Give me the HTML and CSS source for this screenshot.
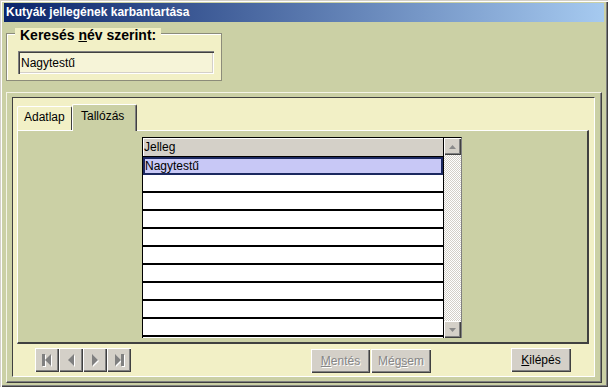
FILE: index.html
```html
<!DOCTYPE html>
<html lang="hu">
<head>
  <meta charset="UTF-8">
  <title>Kutyák jellegének karbantartása</title>
  <link rel="stylesheet" href="styles.css">
</head>
<body>
  <div class="window">
    <div class="titlebar">Kutyák jellegének karbantartása</div>

    <!-- Keresés -->
    <div class="search">
      <div class="legend">Keresés <u>n</u>év szerint:</div>
      <input class="search-input" type="text" value="Nagytestű">
    </div>

    <div class="frame">
      <div class="frame-inner">
        <div class="tabs">
          <div class="tab">Adatlap</div>
          <div class="tab active">Tallózás</div>
        </div>

        <div class="tab-panel">
          <div class="grid">
            <div class="grid-cells">
              <div class="grid-head">Jelleg</div>
              <div class="grid-row selected">Nagytestű</div>
              <div class="grid-row"></div>
              <div class="grid-row"></div>
              <div class="grid-row"></div>
              <div class="grid-row"></div>
              <div class="grid-row"></div>
              <div class="grid-row"></div>
              <div class="grid-row"></div>
              <div class="grid-row"></div>
              <div class="grid-row"></div>
            </div>
            <div class="scrollbar">
              <div class="scroll-btn">
                <svg width="7" height="4" viewBox="0 0 7 4"><polygon points="3.5,0 7,4 0,4" fill="#8a8a8a"/></svg>
              </div>
              <div class="scroll-track"></div>
              <div class="scroll-btn">
                <svg width="7" height="4" viewBox="0 0 7 4"><polygon points="0,0 7,0 3.5,4" fill="#8a8a8a"/></svg>
              </div>
            </div>
          </div>
        </div>

        <div class="toolbar">
          <div class="nav">
            <div class="nav-btn">
              <svg width="24" height="24" viewBox="0 0 24 24">
                <rect x="8" y="7" width="3" height="12" fill="#fff"/>
                <polygon points="17,7 11,13 17,19" fill="#fff"/>
                <rect x="7" y="6" width="3" height="12" fill="#808080"/>
                <polygon points="16,6 10,12 16,18" fill="#808080"/>
              </svg>
            </div>
            <div class="nav-btn">
              <svg width="24" height="24" viewBox="0 0 24 24">
                <polygon points="16,7 10,13 16,19" fill="#fff"/>
                <polygon points="15,6 9,12 15,18" fill="#808080"/>
              </svg>
            </div>
            <div class="nav-btn">
              <svg width="24" height="24" viewBox="0 0 24 24">
                <polygon points="10,7 16,13 10,19" fill="#fff"/>
                <polygon points="9,6 15,12 9,18" fill="#808080"/>
              </svg>
            </div>
            <div class="nav-btn">
              <svg width="24" height="24" viewBox="0 0 24 24">
                <polygon points="9,7 15,13 9,19" fill="#fff"/>
                <rect x="15" y="7" width="3" height="12" fill="#fff"/>
                <polygon points="8,6 14,12 8,18" fill="#808080"/>
                <rect x="14" y="6" width="3" height="12" fill="#808080"/>
              </svg>
            </div>
          </div>
          <div class="btn disabled save"><u>M</u>entés</div>
          <div class="btn disabled cancel">Még<u>s</u>em</div>
          <div class="btn exit"><u>K</u>ilépés</div>
        </div>
      </div>
    </div>
  </div>
</body>
</html>
```

FILE: styles.css
```css
* {
  box-sizing: border-box;
}

body {
  margin: 0;
  background: #cbd0a5;
  font-family: 'Liberation Sans', Arial, sans-serif;
  font-size: 12px;
  color: #000;
}

.window {
  width: 608px;
  height: 387px;
  padding: 3px 4px 0 4px;
  background: #cbd0a5;
  box-shadow: inset 1px 1px #d4d0c8, inset 2px 2px #fff, inset -1px -1px #404040, inset -2px -2px #808080;
  overflow: hidden;
}

.titlebar {
  height: 19px;
  padding-left: 2px;
  line-height: 19px;
  font-weight: bold;
  color: #fff;
  background: linear-gradient(to right, #0a246a, #a6caf0);
}

/* Keresés doboz */
.search {
  width: 216px;
  height: 48px;
  margin: 11px 0 0 2px;
  background: #f2f0c6;
  border: 1px solid #8c8c7a;
  box-shadow: inset 1px 1px #fff;
}

.legend {
  width: fit-content;
  margin: -6px 0 0 8px;
  padding: 0 5px;
  line-height: 14px;
  font-size: 14px;
  font-weight: bold;
  background: #f2f0c6;
}

.search-input {
  display: block;
  width: 196px;
  height: 23px;
  margin: 9px 0 0 11px;
  padding: 0 0 0 3px;
  font-family: 'Liberation Sans', Arial, sans-serif;
  font-size: 12px;
  background: #f6f4d8;
  border: 0;
  box-shadow: inset 1px 1px #808080, inset 2px 2px #404040, inset -1px -1px #fff, inset -2px -2px #d4d0c8;
  outline: none;
}

/* Nagy keret */
.frame {
  width: 596px;
  height: 291px;
  margin: 11px 0 0 2px;
  padding: 4px 0 0 5px;
  border: 1px solid;
  border-color: #f4f4e6 #404040 #404040 #f4f4e6;
  box-shadow: inset -1px -1px #808080;
}

.frame-inner {
  width: 583px;
  height: 280px;
  background: #f2f0c6;
  border: 1px solid;
  border-color: #404040 #fff #fff #404040;
}

.tabs {
  display: flex;
  align-items: flex-end;
  height: 26px;
  margin: 6px 0 0 4px;
}

.tab {
  width: 55px;
  height: 24px;
  padding: 3px 0 0 6px;
  border-top: 1px solid #fff;
  border-left: 1px solid #fff;
  border-right: 1px solid #404040;
  border-radius: 2px 2px 0 0;
}

.tab.active {
  position: relative;
  z-index: 1;
  width: 65px;
  height: 27px;
  margin-bottom: -1px;
  padding: 4px 0 0 8px;
  background: #cbd0a5;
  border-right: 1px solid #404040;
  box-shadow: inset -1px 0 #808080;
}

.tab-panel {
  width: 572px;
  height: 214px;
  margin-left: 4px;
  padding: 6px 0 0 124px;
  background: #cbd0a5;
  border-top: 1px solid #fff;
  border-left: 1px solid #fff;
  border-right: 2px solid #404040;
  border-bottom: 2px solid #404040;
}

/* Táblázat */
.grid {
  display: flex;
  width: 320px;
  height: 201px;
  border-top: 1px solid #000;
  border-left: 1px solid #000;
  border-right: 1px solid #808080;
}

.grid-cells {
  width: 301px;
  border-right: 1px solid #000;
  background: #fff;
}

.grid-head {
  height: 19px;
  padding: 1px 0 0 1px;
  line-height: 16px;
  background: #d4d0c8;
  border-bottom: 1px solid #000;
  box-shadow: inset 1px 1px #fff;
}

.grid-row {
  height: 18px;
  padding-left: 2px;
  line-height: 17px;
  border-bottom: 2px solid #000;
}

.grid-row.selected {
  border-bottom: 0;
  padding-top: 1px;
  background: #c8c8f6;
  box-shadow: inset 0 0 0 2px #1b2860;
}

.scrollbar {
  display: flex;
  flex-direction: column;
  width: 17px;
}

.scroll-btn {
  display: flex;
  align-items: center;
  justify-content: center;
  height: 17px;
  background: #d4d0c8;
  box-shadow: inset 1px 1px #fff, inset -1px -1px #404040, inset -2px -2px #808080;
}

.scroll-track {
  flex: 1;
  background: repeating-conic-gradient(#d4d0c8 0 25%, #fff 0 50%) 0 0 / 2px 2px;
}

/* Alsó gombok */
.toolbar {
  display: flex;
  margin-top: 4px;
}

.nav {
  display: flex;
  margin-left: 22px;
}

.nav-btn {
  width: 24px;
  height: 24px;
  background: #d4d0c8;
  box-shadow: inset 1px 1px #fff, inset -1px -1px #404040, inset -2px -2px #808080;
}

.nav-btn svg {
  display: block;
}

.btn {
  width: 60px;
  height: 24px;
  line-height: 24px;
  text-align: center;
  background: #d4d0c8;
  box-shadow: inset 1px 1px #fff, inset -1px -1px #404040, inset -2px -2px #808080;
}

.btn.disabled {
  color: #868686;
  text-shadow: 1px 1px #fff;
}

.btn.save {
  width: 59px;
  margin-left: 180px;
  margin-top: 1px;
}

.btn.cancel {
  margin-left: 1px;
  margin-top: 1px;
}

.btn.exit {
  margin-left: 80px;
}
```
